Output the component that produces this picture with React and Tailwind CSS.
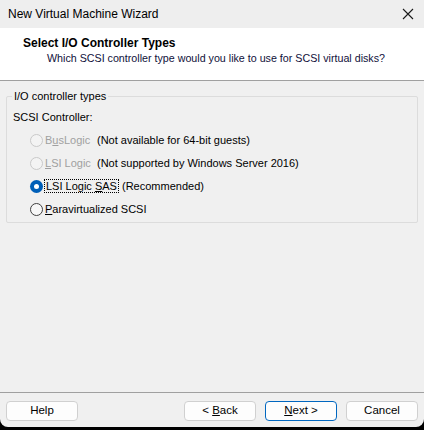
import React from 'react';

const font = { fontFamily: '"Liberation Sans", Arial, sans-serif' };

function Radio({ checked, disabled }) {
  if (checked) {
    return (
      <span className="w-[13px] h-[13px] rounded-full bg-[#005fb8] flex items-center justify-center shrink-0">
        <span className="w-[5px] h-[5px] rounded-full bg-white" />
      </span>
    );
  }
  return (
    <span
      className={
        'w-[13px] h-[13px] rounded-full border shrink-0 ' +
        (disabled ? 'border-[#c9c9c9] bg-[#f3f3f3]' : 'border-[#404040] bg-[#f7f7f7]')
      }
    />
  );
}

function Button({ children, primary }) {
  return (
    <button
      className={
        'w-[72px] h-[20px] rounded-[4px] bg-[#fdfdfd] text-[11.5px] text-black leading-none flex items-center justify-center whitespace-pre ' +
        (primary ? 'border border-[#0067c0]' : 'border border-[#d0d0d0]')
      }
    >
      <span>{children}</span>
    </button>
  );
}

export default function App() {
  return (
    <div className="w-[424px] h-[430px] bg-black" style={font}>
      <div className="w-[424px] h-[427px] bg-[#f0f0f0] rounded-b-[8px] flex flex-col overflow-hidden">
        {/* Title bar */}
        <div className="h-[28px] bg-[#eeeeee] flex items-center justify-between pl-[8px] pr-[9px]">
          <span className="text-[12px] text-black">New Virtual Machine Wizard</span>
          <svg width="12" height="12" viewBox="0 0 12 12" className="mr-[1px]">
            <path d="M1 1L11 11M11 1L1 11" stroke="#1a1a1a" strokeWidth="1.1" />
          </svg>
        </div>

        {/* Header */}
        <div className="h-[53px] bg-white border-b border-[#a0a0a0] pl-[23px] pt-[8px] whitespace-nowrap">
          <div className="text-[12px] font-bold text-black leading-[15px]">Select I/O Controller Types</div>
          <div className="text-[10.7px] text-[#10103a] leading-[15px] pl-[24px]">
            Which SCSI controller type would you like to use for SCSI virtual disks?
          </div>
        </div>

        {/* Body */}
        <div className="flex-1 px-[6px] pt-[15px] text-[11px] whitespace-nowrap">
          <div className="relative border border-[#dcdcdc] rounded-[2px] h-[127px] pl-[6px] pt-[13px]">
            <span className="absolute -top-[8px] left-[5px] px-[2px] bg-[#f0f0f0] leading-[14px] text-black">
              I/O controller types
            </span>
            <div className="leading-[14px] text-black">SCSI Controller:</div>
            <div className="flex flex-col gap-[9px] mt-[9px] pl-[17px] leading-[14px]">
              <div className="flex items-center">
                <Radio disabled />
                <span className="ml-[1px] w-[53px] text-[#a0a0a0] px-[1px]">
                  B<u>u</u>sLogic
                </span>
                <span className="text-black">(Not available for 64-bit guests)</span>
              </div>
              <div className="flex items-center">
                <Radio disabled />
                <span className="ml-[1px] w-[53px] text-[#a0a0a0] px-[1px]">
                  <u>L</u>SI Logic
                </span>
                <span className="text-black">(Not supported by Windows Server 2016)</span>
              </div>
              <div className="flex items-center">
                <Radio checked />
                <span className="ml-[1px] w-[78px]">
                  <span className="px-[1px] border border-dotted border-black text-black">
                    LSI Logic <u>S</u>AS
                  </span>
                </span>
                <span className="text-black">(Recommended)</span>
              </div>
              <div className="flex items-center">
                <Radio />
                <span className="ml-[1px] px-[1px] text-black">
                  <u>P</u>aravirtualized SCSI
                </span>
              </div>
            </div>
          </div>
        </div>

        {/* Footer */}
        <div className="border-t border-[#a0a0a0] h-[35px] flex items-start pt-[8px] px-[6px]">
          <Button>Help</Button>
          <div className="flex-1" />
          <div className="flex gap-[9px]">
            <Button>
              {'< '}<u>B</u>ack
            </Button>
            <Button primary>
              <u>N</u>ext &gt;
            </Button>
            <Button>Cancel</Button>
          </div>
        </div>
      </div>
    </div>
  );
}
